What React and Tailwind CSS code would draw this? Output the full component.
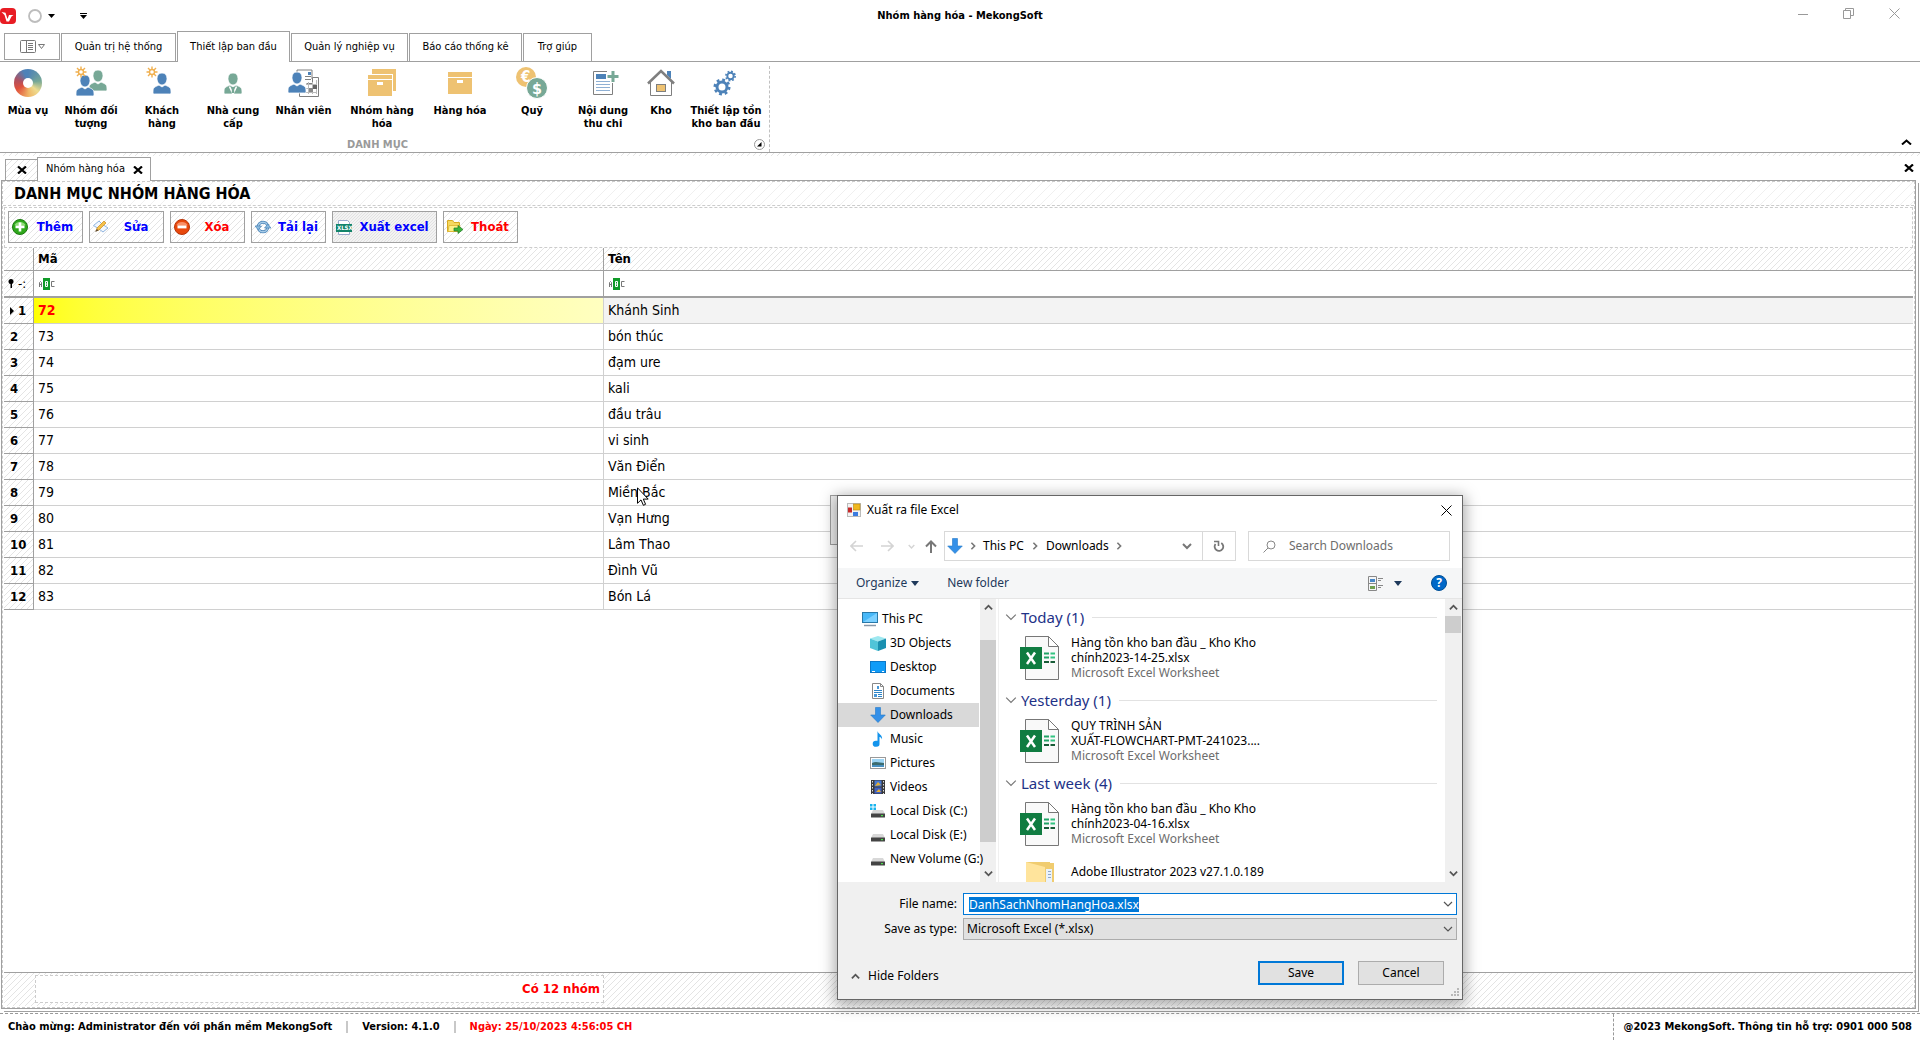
import { useEffect, useRef, useState } from "react";
import clsx from "clsx";

const UI = "font-['DejaVu_Sans_Condensed','DejaVu_Sans',sans-serif]";
const DLG = "font-['Noto_Sans','Open_Sans',sans-serif]";
const HATCH =
  "bg-[linear-gradient(135deg,transparent_44%,#e4e4e4_44%,#e4e4e4_56%,transparent_56%)] bg-[length:6px_6px]";
const HATCH_LIGHT =
  "bg-[linear-gradient(135deg,transparent_47%,#f0f0f0_47%,#f0f0f0_53%,transparent_53%)] bg-[length:10px_10px]";
const HATCH_DENSE =
  "bg-[#f3f3f3] bg-[linear-gradient(135deg,transparent_40%,#e2e2e2_40%,#e2e2e2_60%,transparent_60%)] bg-[length:3px_3px]";

const BLUE = "#4d82b8";
const GREEN = "#77a896";
const SAND = "#eec272";
const GRAY = "#7f7f7f";

/* ---------- ribbon icons ---------- */

function Person({ x, y, color, tie }) {
  return (
    <g transform={`translate(${x} ${y})`}>
      <path
        d="M9 0c3.200 0 5 2 5 5.500S12 12 9 12 4 9 4 5.500 5.800 0 9 0zM6 12l3 2 3-2c3 1.500 6 2 6 6v1.500c0 1-.6 1.500-1.500 1.500h-15C.6 21 0 20.500 0 19.500V18c0-4 3-4.500 6-6z"
        fill={color}
        stroke="#fff"
        strokeWidth="0.800"
      />
      {tie && <path d="M5.500 13.500L9 21l3.500-7.500" fill="none" stroke="#fff" strokeWidth="1.600" />}
      {tie && <path d="M8.200 14h1.600l.6 6h-2.800z" fill={color} />}
    </g>
  );
}

function Star() {
  return (
    <g stroke="#f0b050" strokeWidth="1.400" fill="none">
      <circle cx="6" cy="6" r="2.500" />
      <path d="M6 0.500v3M6 8.500v3M.5 6h3M8.500 6h3M2 2l2 2M8 8l2 2M10 2L8 4M4 8l-2 2" />
    </g>
  );
}

function Gear({ cx, cy, r }) {
  return (
    <g fill="none" stroke={BLUE}>
      <circle cx={cx} cy={cy} r={r} strokeWidth={r * 0.6} />
      <circle cx={cx} cy={cy} r={r * 1.45} strokeWidth={r * 0.5} strokeDasharray={`${r * 0.57} ${r * 0.569}`} />
    </g>
  );
}

const ribbonIcons = {
  season: (
    <foreignObject x="2" y="3" width="28" height="28">
      <div className="h-7 w-7 rounded-full bg-[conic-gradient(#4d82b8,#5f92a8_40deg,#77a896_80deg,#eedc90_130deg,#f0b868_175deg,#e0503c_240deg,#b05060_285deg,#4d82b8_340deg)] p-[9px]">
        <div className="h-[10px] w-[10px] rounded-full bg-white" />
      </div>
    </foreignObject>
  ),
  group: (
    <>
      <Person x={14} y={4} color={GREEN} />
      <Person x={1} y={9} color={BLUE} />
      <Star />
    </>
  ),
  customer: (
    <>
      <Person x={7} y={7} color={BLUE} />
      <Star />
    </>
  ),
  supplier: <Person x={7} y={7} color={GREEN} tie />,
  staff: (
    <>
      <path d="M9 14V4h15v9" fill="#fff" stroke={GRAY} />
      <rect x="20" y="6" width="3" height="3" fill={BLUE} />
      <path d="M17 10.500h6M17 13.500h6" stroke={GRAY} />
      <path d="M11.500 27v3.500h19v-19h-6v6h-6" fill="#fff" stroke={GRAY} />
      <path d="M18 18.500h11M18 22.500h11M16 26.500h13M20.500 16v12M24.500 16v12M28.500 14v14" stroke="#bbb" />
      <rect x="25" y="19" width="4" height="4" fill="#666" />
      <rect x="21" y="22" width="4" height="4" fill="#888" />
      <Person x={0} y={6} color={BLUE} />
    </>
  ),
  boxes: (
    <>
      <path d="M6 3h24v22h-3V8H6z" fill={SAND} />
      <path d="M2 9h24v4H2zM2 14h24v16H2z" fill={SAND} />
      <rect x="11" y="16" width="6" height="3" fill="#fff" />
    </>
  ),
  box: (
    <>
      <path d="M4 6h24v5H4zM4 12h24v16H4z" fill={SAND} />
      <rect x="13" y="14" width="6" height="3" fill="#fff" />
    </>
  ),
  fund: (
    <>
      <circle cx="10" cy="11" r="10" fill={SAND} />
      <circle cx="21" cy="22" r="10.500" fill={GREEN} stroke="#fff" />
      <text x="5" y="16" fontSize="15" fontWeight="bold" fill="#fff">€</text>
      <text x="16" y="28" fontSize="16" fontWeight="bold" fill="#fff">$</text>
    </>
  ),
  receipt: (
    <>
      <path d="M20 5.500H6.500v23h19V17" fill="none" stroke={GRAY} />
      <rect x="9" y="8" width="10" height="5" fill={BLUE} />
      <path d="M9 15.500h14M9 18.500h14M9 21.500h14M9 24.500h14" stroke="#8fb0d4" />
      <path d="M26 5v11M20.500 10.500h11" stroke={GREEN} strokeWidth="3" />
    </>
  ),
  warehouse: (
    <>
      <path d="M22 5h4v8l-4-4z" fill={BLUE} />
      <path d="M5.500 16v13.500h21V16" fill="#fff" stroke={GRAY} />
      <path d="M3 17.500L16 5l13 12.500" fill="none" stroke={GRAY} strokeWidth="2.500" />
      <rect x="11.500" y="18.500" width="9" height="7" fill={SAND} stroke={GRAY} />
    </>
  ),
  gears: (
    <>
      <Gear cx={12} cy={21} r={5} />
      <Gear cx={20.5} cy={10} r={3.2} />
    </>
  ),
};

const ribbonItems = [
  { icon: "season", lines: ["Mùa vụ"], width: "w-14" },
  { icon: "group", lines: ["Nhóm đối", "tượng"], width: "w-[70px]" },
  { icon: "customer", lines: ["Khách", "hàng"], width: "w-[72px]" },
  { icon: "supplier", lines: ["Nhà cung", "cấp"], width: "w-[70px]" },
  { icon: "staff", lines: ["Nhân viên"], width: "w-[71px]" },
  { icon: "boxes", lines: ["Nhóm hàng", "hóa"], width: "w-[86px]" },
  { icon: "box", lines: ["Hàng hóa"], width: "w-[70px]" },
  { icon: "fund", lines: ["Quỹ"], width: "w-[74px]" },
  { icon: "receipt", lines: ["Nội dung", "thu chi"], width: "w-[68px]" },
  { icon: "warehouse", lines: ["Kho"], width: "w-12" },
  { icon: "gears", lines: ["Thiết lập tồn", "kho ban đầu"], width: "w-[82px]" },
];

const ribbonTabs = [
  { label: "Quản trị hệ thống", width: "w-[115px]" },
  { label: "Thiết lập ban đầu", width: "w-[113px]", active: true },
  { label: "Quản lý nghiệp vụ", width: "w-[117px]" },
  { label: "Báo cáo thống kê", width: "w-[113px]" },
  { label: "Trợ giúp", width: "w-[69px]" },
];

/* ---------- toolbar icons ---------- */

const toolIcons = {
  add: (
    <>
      <circle cx="8" cy="8" r="7.500" fill="#2fa81c" stroke="#1c7a10" />
      <path d="M2.500 6a6 5 0 0111 0c-3 2-8 2-11 0z" fill="#8fdc78" />
      <path d="M8 3.500v9M3.500 8h9" stroke="#fff" strokeWidth="2.600" />
    </>
  ),
  edit: (
    <>
      <path d="M.5 6.500L6 2l3 3 6 4-5 4-4-3z" fill="#f2f7fd" stroke="#8fb4de" />
      <path d="M3 12l1-3 7-7 2 2-7 7z" fill="#f5c14a" stroke="#c88a1c" strokeWidth="0.700" />
      <path d="M2 13l2-3 1.500 1.500z" fill="#5a4a38" />
    </>
  ),
  remove: (
    <>
      <circle cx="8" cy="8" r="7.500" fill="#e8480c" stroke="#b83408" />
      <path d="M2.500 6a6 5 0 0111 0c-3 2-8 2-11 0z" fill="#f89068" />
      <path d="M3.500 8h9" stroke="#fff" strokeWidth="2.800" />
    </>
  ),
  reload: (
    <g fill="none" stroke="#4a84b8">
      <circle cx="8" cy="8" r="4.800" strokeWidth="3" />
      <circle cx="8" cy="8" r="4.800" stroke="#a8cce8" strokeWidth="1.400" />
      <path d="M0 7h6.500l-3.300 3.800zM16 9H9.500l3.300-3.800z" fill="#8cbce0" strokeWidth="0.700" />
    </g>
  ),
  excel: (
    <>
      <path d="M2.500 6V1.500h9l2 2V6M2.500 12v3.500h11V12" fill="#fff" stroke="#9aa8cc" />
      <rect x="0" y="5" width="16" height="8" fill="#13846a" />
      <text x="1" y="11" fontSize="6" fontWeight="bold" fill="#fff">XLSX</text>
    </>
  ),
  exit: (
    <>
      <path d="M.5 12.500v-11h5l1.500 2h5.500v9z" fill="#f5d860" stroke="#d8aa20" />
      <path d="M1 12.500l1-6h11l-1 6z" fill="#fdf088" stroke="#dcb430" strokeWidth="0.800" />
      <path d="M7 9h4V6.500l5 4-5 4V12H7z" fill="#3cb43c" stroke="#1f7a24" strokeWidth="0.700" />
    </>
  ),
};

const tools = [
  { icon: "add", label: "Thêm", color: "text-[#0000ff]" },
  { icon: "edit", label: "Sửa", color: "text-[#0000ff]" },
  { icon: "remove", label: "Xóa", color: "text-[#ff0000]" },
  { icon: "reload", label: "Tải lại", color: "text-[#0000ff]" },
  { icon: "excel", label: "Xuất excel", color: "text-[#0000ff]", wide: true },
  { icon: "exit", label: "Thoát", color: "text-[#ff0000]" },
];

const rows = [
  [72, "Khánh Sinh"],
  [73, "bón thúc"],
  [74, "đạm ure"],
  [75, "kali"],
  [76, "đầu trâu"],
  [77, "vi sinh"],
  [78, "Văn Điển"],
  [79, "Miền Bắc"],
  [80, "Vạn Hưng"],
  [81, "Lâm Thao"],
  [82, "Đình Vũ"],
  [83, "Bón Lá"],
];

function CloseMark({ className }) {
  return (
    <svg width="10" height="8" viewBox="0 0 10 8" className={className}>
      <path d="M1 .5l8 7M9 .5l-8 7" stroke="#000" strokeWidth="2.200" />
    </svg>
  );
}

function Caret({ dir = "down", color = "#555", width = 1.5, size = 9 }) {
  const d = { down: "M1 3l4 4 4-4", up: "M1 7l4-4 4 4", right: "M3 1l4 4-4 4" }[dir];
  return (
    <svg width={size} height={size} viewBox="0 0 10 10" className="shrink-0">
      <path d={d} fill="none" stroke={color} strokeWidth={width} />
    </svg>
  );
}

function TitleBar() {
  return (
    <header className="grid h-[31px] grid-cols-[1fr_auto_1fr] items-start">
      <div className="flex items-center pt-2">
        <svg width="16" height="16" viewBox="0 0 16 16">
          <rect width="16" height="16" rx="4" fill="#e81c24" />
          <path d="M1.500 4l4 .8L7.500 11 9 7h4.500l-2 1.500L9 13.500H6.500L4.500 7z" fill="#fff" />
        </svg>
        <svg width="14" height="14" viewBox="0 0 14 14" className="ml-3">
          <circle cx="7" cy="7" r="6" fill="none" stroke="#bdbdbd" strokeWidth="1.800" />
        </svg>
        <svg width="7" height="4" viewBox="0 0 7 4" className="ml-1.5">
          <path d="M0 0h7L3.500 4z" />
        </svg>
        <svg width="7" height="6" viewBox="0 0 7 6" className="ml-[25px]">
          <path d="M0 0h7v1H0zM0 2h7L3.500 6z" />
        </svg>
      </div>
      <h1 className="pt-2 text-[11px] leading-4 font-bold">Nhóm hàng hóa - MekongSoft</h1>
      <div className="flex justify-end gap-[35px] pt-2 pr-5">
        <button aria-label="Minimize">
          <svg width="10" height="11" viewBox="0 0 10 11"><path d="M0 6.500h10" stroke="#999" /></svg>
        </button>
        <button aria-label="Restore">
          <svg width="11" height="11" viewBox="0 0 11 11" fill="none" stroke="#999">
            <path d="M.5 2.500h7v8h-7zM2.500 2V.5h8v7H8" />
          </svg>
        </button>
        <button aria-label="Close">
          <svg width="11" height="11" viewBox="0 0 11 11"><path d="M.5.5l10 10M10.500.5l-10 10" stroke="#999" /></svg>
        </button>
      </div>
    </header>
  );
}

function RibbonTabs() {
  return (
    <nav className="flex h-[31px] items-end gap-px border-b border-[#a0a0a0] pl-1">
      <button className="mb-px flex h-[27px] w-14 items-center justify-center gap-0.5 border border-[#a0a0a0]" aria-label="Menu">
        <svg width="16" height="13" viewBox="0 0 16 13" fill="none" stroke="#777">
          <rect x=".5" y=".5" width="15" height="12" rx="1" />
          <path d="M6.500 0v13M8 3.500h5M8 5.500h5M8 7.500h5M8 9.500h5" />
        </svg>
        <svg width="7" height="5" viewBox="0 0 7 5"><path d="M.5.500h6L3.500 4.500z" fill="none" stroke="#777" /></svg>
      </button>
      {ribbonTabs.map((t) => (
        <button
          key={t.label}
          className={clsx(
            "border border-b-0 border-[#a0a0a0] bg-white text-[11px] whitespace-nowrap",
            t.width,
            t.active ? "-mb-px h-[31px]" : "h-7"
          )}
        >
          {t.label}
        </button>
      ))}
    </nav>
  );
}

function Ribbon() {
  return (
    <section className="flex h-[91px] items-start justify-between border-b border-[#a0a0a0] pt-1">
      <div className="h-[86px] border-r border-dashed border-[#c0c0c0]">
        <div className="flex h-[72px] pr-0.5">
          {ribbonItems.map((item) => (
            <button key={item.icon} className={clsx("flex flex-col items-center", item.width)}>
              <svg width="32" height="32" viewBox="0 0 32 32" className="overflow-visible">{ribbonIcons[item.icon]}</svg>
              <span className="mt-1.5 text-[11px] leading-[13px] font-bold whitespace-nowrap">
                {item.lines.map((line) => (
                  <span key={line} className="block">{line}</span>
                ))}
              </span>
            </button>
          ))}
        </div>
        <div className="grid grid-cols-[1fr_auto_1fr] items-center leading-[13px]">
          <span />
          <span className="pr-3.5 text-[11px] font-bold text-[#9a9a9a]">DANH MỤC</span>
          <button aria-label="Danh mục" className="mr-1 justify-self-end">
            <svg width="11" height="11" viewBox="0 0 11 11">
              <circle cx="5.500" cy="5.500" r="5" fill="#fff" stroke="#999" />
              <path d="M7.500 3v4.500H3z" />
            </svg>
          </button>
        </div>
      </div>
      <button aria-label="Collapse ribbon" className="mt-[73px] mr-2">
        <svg width="11" height="6" viewBox="0 0 11 6"><path d="M1 5.500l4.500-4 4.500 4" fill="none" stroke="#000" strokeWidth="2" /></svg>
      </button>
    </section>
  );
}

function DocTabs() {
  return (
    <>
      <div className={clsx("h-[3px]", HATCH)} />
      <div className="flex h-6 items-end pr-1.5 pl-[5px]">
        <button aria-label="Close tab" className={clsx("flex h-[21px] w-8 items-center justify-center border border-r-0 border-b-0 border-[#a0a0a0]", HATCH)}>
          <CloseMark />
        </button>
        <div className="relative -mb-px flex h-6 w-[114px] items-center border border-b-0 border-[#a0a0a0] bg-white pl-2">
          <span className="text-[11px] whitespace-nowrap">Nhóm hàng hóa</span>
          <button aria-label="Close Nhóm hàng hóa" className="absolute right-[7px]">
            <CloseMark />
          </button>
        </div>
        <button aria-label="Close document" className="mb-2 ml-auto">
          <CloseMark />
        </button>
      </div>
    </>
  );
}

function FilterMark() {
  return (
    <svg width="17" height="12" viewBox="0 0 17 12" className="block">
      <rect x="5" y="0" width="7" height="12" fill="#109a28" />
      <g fill="none">
        <path d="M1.500 9V4.500l1-1h0l1 1V9M1.500 6.500h2M16.500 3.500h-3v5h3" stroke="#777" />
        <path d="M7.500 3.500v5h2v-5zM7.500 6h2" stroke="#fff" />
      </g>
    </svg>
  );
}

function GroupTable() {
  const [current, setCurrent] = useState(0);
  const side = "border-r border-b border-[#a0a0a0]";
  return (
    <table className="w-full table-fixed border-separate border-spacing-0 text-left">
      <colgroup>
        <col className="w-[30px]" />
        <col className="w-[570px]" />
        <col />
      </colgroup>
      <thead>
        <tr className={clsx("h-[23px] text-[13px]", HATCH)}>
          <th className={clsx(side, "p-0")} />
          <th className={clsx(side, "py-0 pl-1")}>Mã</th>
          <th className="border-b border-[#a0a0a0] py-0 pl-1">Tên</th>
        </tr>
        <tr className="h-[27px] text-[13px] font-normal">
          <td className={clsx(side, "border-b-2 p-0", HATCH)}>
            <div className="flex items-center gap-1 pl-1">
              <svg width="6" height="9" viewBox="0 0 6 9"><circle cx="3" cy="2.500" r="2.500" /><path d="M2.500 4h1.500v5H2.500z" /></svg>
              <span>-:</span>
            </div>
          </td>
          <td className="border-r border-b-2 border-[#a0a0a0] py-0 pl-1"><FilterMark /></td>
          <td className="border-b-2 border-[#a0a0a0] py-0 pl-1"><FilterMark /></td>
        </tr>
      </thead>
      <tbody>
        {rows.map(([code, name], i) => (
          <tr key={code} className="h-[26px] text-[14px]" onClick={() => setCurrent(i)}>
            <th className={clsx(side, "p-0 text-[13px]", HATCH)}>
              <div className="flex items-center gap-1 pl-1.5">
                {i === current && (
                  <svg width="4" height="8" viewBox="0 0 4 8"><path d="M0 0l4 4-4 4z" /></svg>
                )}
                {i + 1}
              </div>
            </th>
            <td
              className={clsx(
                "border-r border-b border-[#d0d0d0] py-0 pl-1",
                i === current && "bg-linear-to-r from-[#ffff00] to-[#ffffc0] font-bold text-[#ff0000]"
              )}
            >
              {code}
            </td>
            <td className={clsx("border-b border-[#d0d0d0] py-0 pl-1", i === current && "bg-[#f3f3f3]")}>{name}</td>
          </tr>
        ))}
      </tbody>
    </table>
  );
}

function Panel() {
  return (
    <main className="mr-1 mb-1 ml-px flex grow flex-col border border-[#a0a0a0] bg-white shadow-[2px_2px_0_0_#fff,3px_3px_0_0_#a0a0a0]">
      <div className="flex grow flex-col border border-dashed border-[#cccccc]">
        <h2 className={clsx("h-6 border-b border-dashed border-[#cccccc] pl-[11px] text-[16px] leading-6 font-bold", HATCH_LIGHT)}>
          DANH MỤC NHÓM HÀNG HÓA
        </h2>
        <div className="mx-px mt-px flex h-[41px] items-start gap-1.5 border border-dashed border-[#cccccc] p-[3px]">
          {tools.map((t) => (
            <button
              key={t.icon}
              className={clsx(
                "flex h-8 items-center border border-[#a0a0a0] px-[3px]",
                t.wide ? "w-[105px]" : "w-[75px]",
                t.wide ? HATCH_DENSE : HATCH
              )}
            >
              <svg width="16" height="16" viewBox="0 0 16 16" className="shrink-0">{toolIcons[t.icon]}</svg>
              <span className={clsx("grow pl-[3px] text-center text-[13px] font-bold whitespace-nowrap", t.color)}>{t.label}</span>
            </button>
          ))}
        </div>
        <div className="mx-px grow">
          <GroupTable />
        </div>
        <div className={clsx("mx-px mb-px flex h-[34px] border-t border-[#a0a0a0] pt-0.5 pl-[31px]", HATCH)}>
          <div className="flex h-[28px] w-[569px] items-center justify-end border border-dashed border-[#cccccc] bg-white pr-[3px] text-[13px] font-bold text-[#ff0000]">
            Có 12 nhóm
          </div>
        </div>
      </div>
    </main>
  );
}

function StatusBar() {
  return (
    <footer className="flex h-[27px] items-center border-t border-dashed border-[#999] text-[11px] font-bold whitespace-nowrap">
      <span className="pl-2">Chào mừng: Administrator đến với phần mềm MekongSoft</span>
      <span className="mx-3.5 h-3 w-0.5 bg-[#c8c8c8]" />
      <span>Version: 4.1.0</span>
      <span className="mx-3.5 h-3 w-0.5 bg-[#c8c8c8]" />
      <span className="text-[#ff0000]">Ngày: 25/10/2023 4:56:05 CH</span>
      <span className="ml-auto flex h-full items-center border-l border-dashed border-[#999] pr-2 pl-2.5">
        @2023 MekongSoft. Thông tin hỗ trợ: 0901 000 508
      </span>
    </footer>
  );
}

/* ---------- save dialog ---------- */

const downArrow = (
  <path d="M5.500.5h5V8h4.800L8 15.500.7 8h4.800z" fill="#3490e8" stroke="#2478c8" strokeWidth="0.600" />
);

function drive(windows) {
  return (
    <>
      {windows && <path d="M0 1h2.500v2.500H0zM3.500 1H6v2.500H3.500zM0 4.500h2.500V7H0zM3.500 4.500H6V7H3.500z" fill="#19b4ee" />}
      <path d="M3 7h10l2 4H1z" fill="#d8d8d8" />
      <rect x="1" y="10.500" width="14" height="4" rx="0.500" fill="#444" />
      <rect x="11" y="12" width="2" height="1.200" fill="#4be04b" />
    </>
  );
}

const places = [
  {
    label: "This PC",
    icon: (
      <>
        <rect x=".5" y="1.500" width="15" height="10" fill="#48b8f8" stroke="#2878a8" />
        <path d="M1 11L15 2v9z" fill="#7cd0ff" />
        <path d="M2 14.500h12" stroke="#8898a8" strokeWidth="1.500" />
      </>
    ),
  },
  {
    label: "3D Objects",
    icon: (
      <>
        <path d="M0 3.500L8 1l8 2.500-8 3z" fill="#9ee8f0" />
        <path d="M0 3.500l8 3V16l-8-3z" fill="#50c4d8" />
        <path d="M16 3.500l-8 3V16l8-3z" fill="#1a90b0" />
      </>
    ),
  },
  {
    label: "Desktop",
    icon: (
      <>
        <rect x=".5" y="2.500" width="15" height="11" fill="#109cf8" stroke="#0c78c8" />
        <path d="M2 12.500h3M12 12.500h2" stroke="#fff" />
      </>
    ),
  },
  {
    label: "Documents",
    icon: (
      <>
        <path d="M2.500.5h8l3 3v12h-11z" fill="#fff" stroke="#888" />
        <path d="M10.500.5v3h3" fill="none" stroke="#888" />
        <path d="M4 7.500h8M4 9.500h8M8 11.500h4M8 13.500h4" stroke="#2c84c8" />
        <path d="M7 3h2v3H7zM4 11h3v3H4z" fill="#4898d8" />
      </>
    ),
  },
  { label: "Downloads", icon: downArrow, active: true },
  {
    label: "Music",
    icon: <path d="M7.500 0c.5 3 5.500 4 4.500 8.500C11.500 6.500 10 6 9.500 6v6.500A3.400 3 0 116.500 9.800H7.500z" fill="#1494ec" />,
  },
  {
    label: "Pictures",
    icon: (
      <>
        <rect x=".5" y="2.500" width="15" height="11" fill="#fff" stroke="#999" />
        <path d="M2 4h12v4H2z" fill="#9cd4f4" />
        <path d="M2 8c4-2 8 0 12 0v4H2z" fill="#3c6c70" />
        <path d="M2 10h12v2H2z" fill="#4890c0" />
      </>
    ),
  },
  {
    label: "Videos",
    icon: (
      <>
        <rect x="1" y="1" width="14" height="14" fill="#383838" />
        <path d="M2.500 2v13M13.500 2v13" stroke="#ddd" strokeDasharray="1.500 1.500" />
        <rect x="4.500" y="1.500" width="7" height="6" fill="#4878d0" />
        <rect x="4.500" y="8.500" width="7" height="6" fill="#4060c0" />
        <path d="M5 7l3-4 3 3zM6 13l3-3 2 3z" fill="#e8b030" />
      </>
    ),
  },
  { label: "Local Disk (C:)", icon: drive(true) },
  { label: "Local Disk (E:)", icon: drive(false) },
  { label: "New Volume (G:)", icon: drive(false) },
];

const fileGroups = [
  { title: "Today (1)", lines: ["Hàng tồn kho ban đầu _ Kho Kho", "chính2023-14-25.xlsx"] },
  { title: "Yesterday (1)", lines: ["QUY TRÌNH SẢN", "XUẤT-FLOWCHART-PMT-241023...."] },
  { title: "Last week (4)", lines: ["Hàng tồn kho ban đầu _ Kho Kho", "chính2023-04-16.xlsx"] },
];

function ExcelFile() {
  return (
    <svg width="40" height="45" viewBox="0 0 40 45" className="shrink-0">
      <path d="M5.500.5h23l10 10v33H5.500z" fill="#f9f9f9" stroke="#777" />
      <path d="M28.500.5v10h10z" fill="#fff" stroke="#777" />
      <path d="M24 17.500h5M24 21.500h5" stroke="#21a366" strokeWidth="2" />
      <path d="M30.500 17.500H35M30.500 21.500H35" stroke="#33c481" strokeWidth="2" />
      <path d="M24 26h5M30.500 26H35" stroke="#185c37" strokeWidth="2" />
      <rect x="0" y="11" width="22" height="22" fill="#107c41" />
      <path d="M7 16.500l8 11.500M15 16.500L7 28" stroke="#fff" strokeWidth="2.500" />
    </svg>
  );
}

function ScrollBar({ thumb }) {
  return (
    <div className="flex w-4 shrink-0 flex-col items-center bg-[#f0f0f0]">
      <button aria-label="Scroll up" className="flex h-[17px] items-center"><Caret dir="up" width={2} /></button>
      <div className={clsx("w-full bg-[#cdcdcd]", thumb)} />
      <button aria-label="Scroll down" className="mt-auto flex h-[17px] items-center"><Caret width={2} /></button>
    </div>
  );
}

function SaveDialog() {
  const nameRef = useRef(null);
  useEffect(() => {
    nameRef.current?.focus();
    nameRef.current?.select();
  }, []);

  return (
    <div
      role="dialog"
      aria-label="Xuất ra file Excel"
      className={clsx(
        "absolute top-[495px] left-[837px] flex h-[505px] w-[626px] flex-col border border-[#666] bg-white text-[12px] shadow-[0_3px_14px_2px_rgba(0,0,0,0.35)]",
        DLG
      )}
    >
      <div className="flex h-[30px] shrink-0 items-center pr-2.5 pb-0.5 pl-[9px]">
        <svg width="14" height="14" viewBox="0 0 14 14">
          <rect x=".5" y=".5" width="13" height="13" fill="#f4f4f4" stroke="#bbb" />
          <rect x="1" y="4.500" width="4" height="5" fill="#c82828" />
          <rect x="6.500" y="1" width="6.500" height="6" fill="#f0b820" stroke="#b88810" strokeWidth="0.600" />
          <rect x="6" y="9" width="5" height="4" fill="#3c7ce0" />
        </svg>
        <span className="ml-1.5">Xuất ra file Excel</span>
        <button aria-label="Close dialog" className="ml-auto">
          <svg width="11" height="11" viewBox="0 0 11 11"><path d="M.5.5l10 10M10.500.5l-10 10" stroke="#000" /></svg>
        </button>
      </div>

      <div className="flex h-[42px] shrink-0 items-center px-3 pt-[5px] pb-[7px]">
        <svg width="13" height="12" viewBox="0 0 13 12" fill="none" stroke="#d4d4d4" strokeWidth="1.600"><path d="M13 6H1.500M6 1L1 6l5 5" /></svg>
        <svg width="13" height="12" viewBox="0 0 13 12" fill="none" stroke="#d4d4d4" strokeWidth="1.600" className="ml-[18px]"><path d="M0 6h11.500M7 1l5 5-5 5" /></svg>
        <span className="ml-3.5"><Caret color="#d4d4d4" size={7} width={2} /></span>
        <svg width="12" height="13" viewBox="0 0 12 13" fill="none" stroke="#777" strokeWidth="2" className="ml-2.5"><path d="M6 13V2M1 6.500L6 1.500l5 5" /></svg>
        <div className="ml-[7px] flex h-[30px] grow items-center border border-[#d9d9d9] pl-0.5">
          <svg width="16" height="16" viewBox="0 0 16 16">{downArrow}</svg>
          <span className="mx-1.5"><Caret dir="right" width={2} color="#777" size={8} /></span>
          This PC
          <span className="mx-[7px]"><Caret dir="right" width={2} color="#777" size={8} /></span>
          Downloads
          <span className="mx-1.5"><Caret dir="right" width={2} color="#777" size={8} /></span>
          <span className="mr-2.5 ml-auto"><Caret width={2} color="#777" size={10} /></span>
          <button aria-label="Refresh" className="flex h-full w-[33px] items-center justify-center border-l border-[#d9d9d9]">
            <svg width="12" height="12" viewBox="0 0 12 12" fill="none" stroke="#777" strokeWidth="1.800">
              <path d="M2.500 4A4.300 4.300 0 108.300 3" />
              <path d="M1 1.500h4.500V6" strokeWidth="1.600" />
            </svg>
          </button>
        </div>
        <div className="ml-3 flex h-[30px] w-[202px] items-center border border-[#d9d9d9] pl-3.5">
          <svg width="13" height="13" viewBox="0 0 13 13" fill="none" stroke="#888"><circle cx="8" cy="5" r="4" /><path d="M5 8L.5 12.500" /></svg>
          <input aria-label="Search" placeholder="Search Downloads" className="ml-[13px] w-[150px] outline-none placeholder:text-[#6d6d6d]" />
        </div>
      </div>

      <div className="flex h-[31px] shrink-0 items-center border-b border-[#e5e5e5] bg-[#f5f6f7] pr-[15px] pl-[18px] text-[#1e395b]">
        <button className="flex items-center gap-1">
          Organize
          <svg width="8" height="5" viewBox="0 0 8 5" fill="#1e395b"><path d="M0 0h8L4 5z" /></svg>
        </button>
        <button className="ml-7">New folder</button>
        <button aria-label="View" className="ml-auto flex items-center gap-[11px]">
          <svg width="15" height="15" viewBox="0 0 15 15" fill="none" stroke="#888">
            <path d="M.5.500h8v14h-8zM.5 7.500h8M10 2.500h5M10 4.500h3M10 9.500h5M10 11.500h3" />
            <path d="M2 4.500h5" stroke="#4888c8" strokeWidth="3" />
            <path d="M2 11.500h5" stroke="#70a050" strokeWidth="3" />
          </svg>
          <svg width="8" height="5" viewBox="0 0 8 5" fill="#1e395b"><path d="M0 0h8L4 5z" /></svg>
        </button>
        <button aria-label="Help" className="ml-[29px] h-4 w-4 rounded-full border border-[#004f96] bg-[#0068c8] text-[12px] leading-[14px] font-bold text-white">?</button>
      </div>

      <div className="flex h-[283px] shrink-0 border-r border-[#f0f0f0]">
        <ul className="relative z-10 w-[142px] shrink-0 pt-2">
          {places.map((p, i) => (
            <li
              key={p.label}
              className={clsx("flex h-6 items-center gap-1 whitespace-nowrap", i ? "pl-8" : "pl-6", p.active && "mr-px bg-[#d9d9d9]")}
            >
              <svg width="16" height="16" viewBox="0 0 16 16" className="shrink-0">{p.icon}</svg>
              {p.label}
            </li>
          ))}
        </ul>
        <ScrollBar thumb="mt-6 h-[202px]" />
        <div className="ml-0.5 h-full grow overflow-hidden border-l border-[#f0f0f0] pt-[7px]">
          {fileGroups.map((g) => (
            <section key={g.title} className="h-[83px] pr-2">
              <h3 className="flex h-[22px] items-center text-[15px] text-[#1e3287]">
                <span className="mr-1 ml-1.5"><Caret color="#777" size={12} width={1} /></span>
                {g.title}
                <span className="ml-2 h-px grow bg-[#e2e2e2]" />
              </h3>
              <div className="flex pt-2 pl-[21px]">
                <ExcelFile />
                <p className="-mt-px ml-[11px] leading-[15px] whitespace-nowrap">
                  {g.lines[0]}
                  <br />
                  {g.lines[1]}
                  <br />
                  <span className="text-[#6d6d6d]">Microsoft Excel Worksheet</span>
                </p>
              </div>
            </section>
          ))}
          <div className="flex pt-1.5 pl-[27px]">
            <svg width="30" height="30" viewBox="0 0 30 30" className="shrink-0">
              <path d="M0 1h24v1h4v30H0z" fill="#f0cc70" />
              <path d="M20 8h6v24h-6z" fill="#eaf2fa" />
              <path d="M22 10.500h3M22 13.500h3M22 16.500h3" stroke="#90a8c8" />
              <path d="M0 1l19 5v26H0z" fill="#ffe49c" />
            </svg>
            <span className="ml-[15px] leading-[22px] whitespace-nowrap">Adobe Illustrator 2023 v27.1.0.189</span>
          </div>
        </div>
        <ScrollBar thumb="h-[17px]" />
      </div>

      <div className="relative flex grow flex-col bg-[#f0f0f0] pt-[11px] pr-[5px]">
        <div className="grid grid-cols-[119px_1fr] items-center gap-x-1.5 gap-y-[3px]">
          <label htmlFor="fname" className="text-right">File name:</label>
          <div className="flex h-[22px] items-center border border-[#0078d7] bg-white pr-[3px] pl-[5px]">
            <input
              id="fname"
              ref={nameRef}
              defaultValue="DanhSachNhomHangHoa.xlsx"
              className="h-[15px] grow leading-[15px] outline-none selection:bg-[#0078d7] selection:text-white"
            />
            <Caret size={10} width={1.200} />
          </div>
          <label htmlFor="ftype" className="text-right">Save as type:</label>
          <div className="flex h-[22px] items-center border border-[#acacac] bg-[#e1e1e1] pr-[3px] pl-[3px]">
            <select id="ftype" className="grow appearance-none outline-none">
              <option>Microsoft Excel (*.xlsx)</option>
            </select>
            <Caret size={10} width={1.200} />
          </div>
        </div>
        <div className="mt-[21px] flex items-center pr-[13px] pl-[13px]">
          <button className="mt-1.5 flex items-center gap-2">
            <Caret dir="up" width={2} />
            Hide Folders
          </button>
          <button className="ml-auto h-6 w-[86px] border-2 border-[#0078d7] bg-[#e1e1e1]">Save</button>
          <button className="ml-3.5 h-6 w-[86px] border border-[#acacac] bg-[#e1e1e1]">Cancel</button>
        </div>
        <svg width="9" height="9" viewBox="0 0 9 9" fill="#b8b8b8" className="absolute right-0.5 bottom-0.5">
          <path d="M6 0h2v2H6zM3 3h2v2H3zM6 3h2v2H6zM0 6h2v2H0zM3 6h2v2H3zM6 6h2v2H6z" />
        </svg>
      </div>
    </div>
  );
}

export default function App() {
  return (
    <div className={clsx("relative flex min-h-screen flex-col bg-white text-black", UI)}>
      <TitleBar />
      <RibbonTabs />
      <Ribbon />
      <DocTabs />
      <Panel />
      <StatusBar />

      {/* progress window left open behind the dialog */}
      <div className="absolute top-[495px] left-[830px] h-[50px] w-[260px] border border-[#a0a0a0] bg-[#f0f0f0]" />
      <SaveDialog />

      <svg width="12" height="19" viewBox="0 0 12 19" className="pointer-events-none absolute top-[487px] left-[637px]">
        <path d="M.5.8v15.500l3.500-3.400 2.400 5.400 2.200-1-2.300-5.200h4.900z" fill="#fff" stroke="#000" />
      </svg>
    </div>
  );
}
